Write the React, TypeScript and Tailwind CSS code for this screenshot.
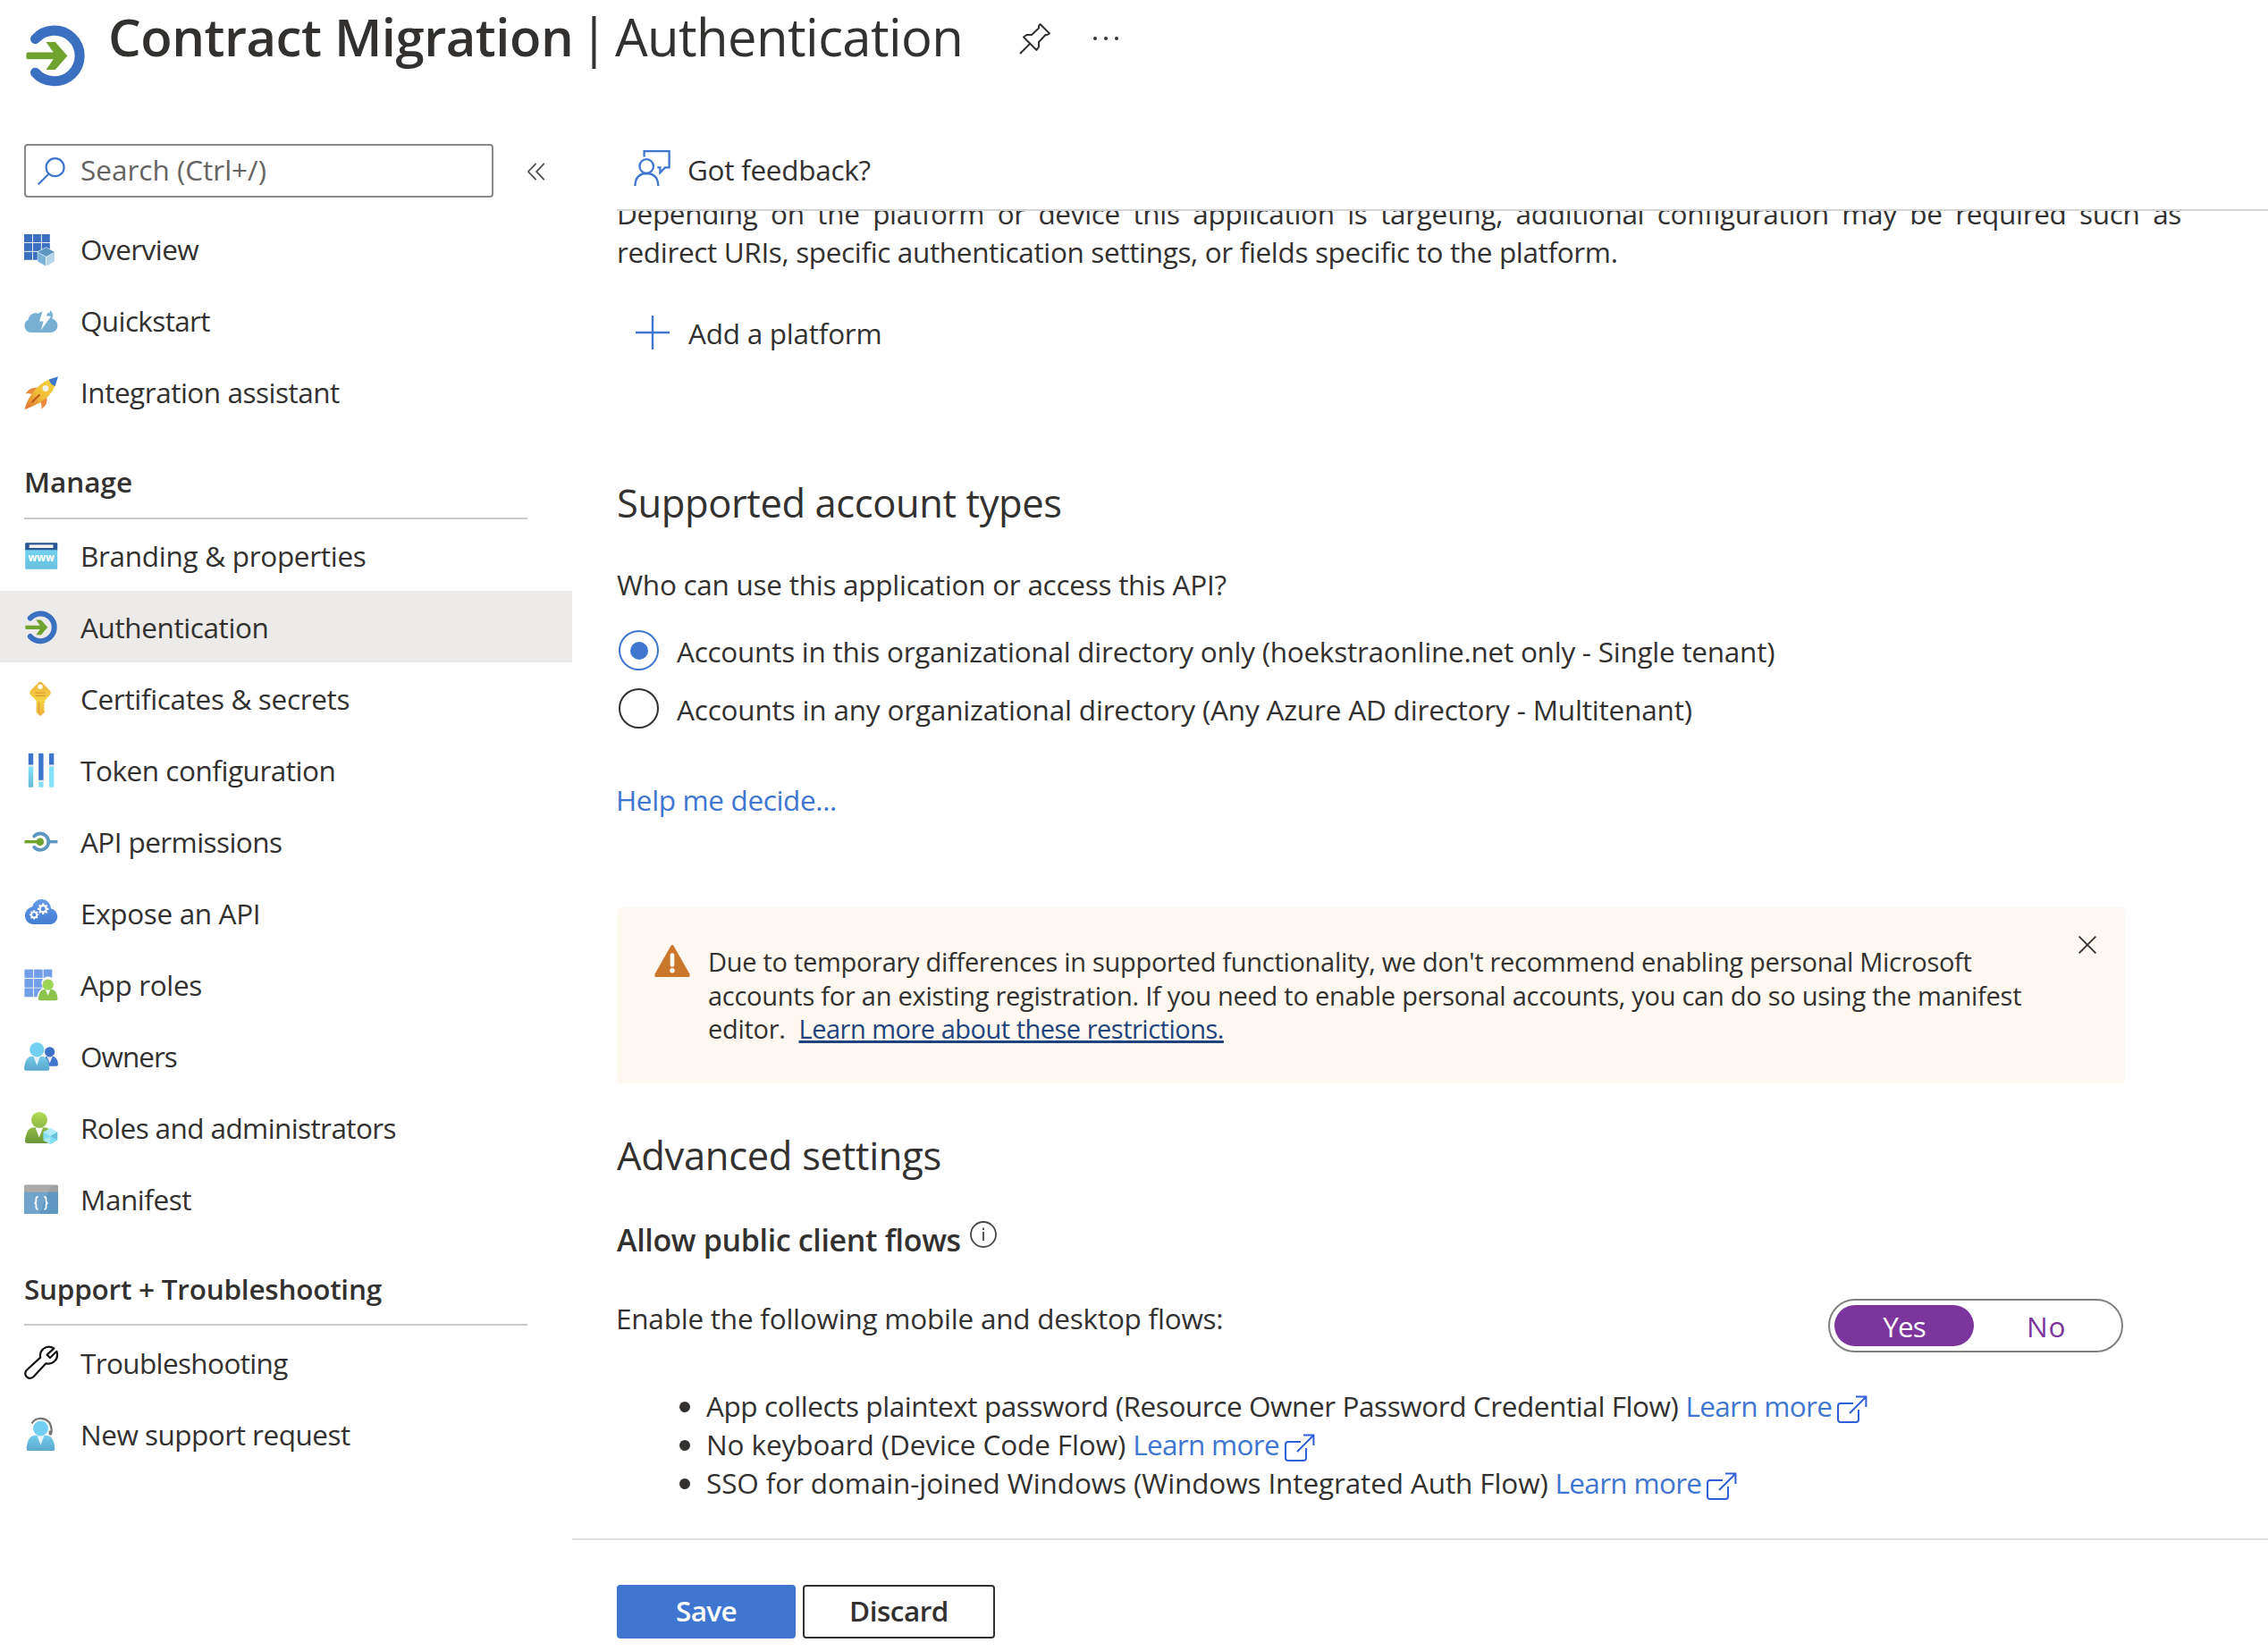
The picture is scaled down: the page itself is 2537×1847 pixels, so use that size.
import type { ReactNode } from 'react';

function Svg({ children }: { children: ReactNode }) {
  return (
    <svg viewBox="0 0 38 38" className="size-[38px] shrink-0 overflow-visible" fill="none">
      {children}
    </svg>
  );
}

const authShapes = (
  <>
    <path d="M6.8 9.6A15.4 15.4 0 1 1 6.8 30" stroke="#3b70c1" strokeWidth="6" strokeLinecap="round" />
    <path
      d="M2.4 17.7H17.8L13.3 11.4H18.9L26.3 19.8L18.9 28.2H13.3L17.8 21.9H2.4Q1.3 21.9 1.3 20.8V18.8Q1.3 17.7 2.4 17.7Z"
      fill="#6fa22e"
    />
  </>
);

const OverviewIcon = () => (
  <Svg>
    {[0, 9.9, 19.8].map((x) =>
      [1, 10.9, 20.8].map((y) => <rect key={`${x}-${y}`} x={x} y={y} width="9" height="9" fill="#3b70c1" />),
    )}
    <path d="M24.6 15.2L34.4 20.6V31.6L24.6 37L14.8 31.6V20.6Z" fill="#fff" />
    <path d="M24.6 15.8L34 21L24.6 26L15.2 21Z" fill="#5c98c2" />
    <path d="M15.2 21.6L24.2 26.6V36.4L15.2 31.4Z" fill="#7ab3d6" />
    <path d="M34 21.6L25 26.6V36.4L34 31.4Z" fill="#b6d5e8" />
  </Svg>
);

const QuickstartIcon = () => (
  <Svg>
    <path
      d="M7.5 31A7.5 7.5 0 0 1 4.6 16.8A8.2 8.2 0 0 1 15.8 9.8A10 10 0 0 1 32 15.8A7.8 7.8 0 0 1 30.5 31Z"
      fill="#78b0d4"
    />
    <path d="M21.6 4.5H28L25 12.4H30.4L18.6 28.6L21.6 18.6H17Z" fill="#fff" />
    <path d="M27.3 12L29.4 6.2Q32.6 9.6 32.2 13.5Z" fill="#78b0d4" />
  </Svg>
);

const RocketIcon = () => (
  <Svg>
    <defs>
      <linearGradient id="rocketBody" x1="30" y1="5" x2="5" y2="36" gradientUnits="userSpaceOnUse">
        <stop stopColor="#f0d03c" />
        <stop offset=".5" stopColor="#f2bf3a" />
        <stop offset="1" stopColor="#e07a30" />
      </linearGradient>
    </defs>
    <path d="M15.5 13Q6 11.5 1.6 19.4Q5.5 18.2 10 20.5Z" fill="#e8893b" />
    <path d="M25.4 23.5Q27 32 19.2 36.4Q20.4 32 17.5 27.5Z" fill="#e8893b" />
    <path d="M28.5 3.2L34.8 10.2Q30.5 21.5 17.5 29.5Q8.5 34.2 .4 37.2Q3 27.5 8.6 19.6Q17 7.8 28.5 3.2Z" fill="url(#rocketBody)" />
    <path d="M38 .2L27.8 3.5Q29 9 34.6 10.9Z" fill="#3f76cf" />
    <circle cx="24" cy="13.6" r="3.5" fill="#f3f1ee" />
    <path d="M17.6 20.4L8.6 29" stroke="#c05a1c" strokeWidth="2.2" />
  </Svg>
);

const BrandingIcon = () => (
  <Svg>
    <defs>
      <linearGradient id="brand" x1="0" y1="13" x2="0" y2="35" gradientUnits="userSpaceOnUse">
        <stop stopColor="#74d3f2" />
        <stop offset="1" stopColor="#66bedd" />
      </linearGradient>
    </defs>
    <rect x="1.2" y="5.3" width="36" height="29.4" rx="1.2" fill="url(#brand)" />
    <path d="M1.2 13.2V6.5Q1.2 5.3 2.4 5.3H36Q37.2 5.3 37.2 6.5V13.2Z" fill="#2c5797" />
    <rect x="5.7" y="7.4" width="26.8" height="3.6" fill="#f2f2f2" />
    <text x="19.2" y="26.4" textAnchor="middle" className="font-['Open_Sans'] text-[11.5px] font-bold" fill="#fff">
      www
    </text>
  </Svg>
);

const AuthIcon = () => <Svg>{authShapes}</Svg>;

const KeyIcon = () => (
  <Svg>
    <defs>
      <linearGradient id="key" x1="0" y1="0" x2="0" y2="39" gradientUnits="userSpaceOnUse">
        <stop stopColor="#eeb13c" />
        <stop offset=".55" stopColor="#f5d445" />
        <stop offset="1" stopColor="#eeb040" />
      </linearGradient>
    </defs>
    <path
      d="M15.6 1.9Q18 -.3 20.4 1.9L28.6 10.2Q31 13 28.6 15.8L23.2 21.8V24L21.8 25.4L23.2 27L21.8 28.6L23.2 30.2L21.8 31.8L23.2 33.4V34.4L18.8 38.6Q18 39.2 17.2 38.6L13.6 34.8V21.8L7.4 15.8Q5 13 7.4 10.2Z"
      fill="url(#key)"
    />
    <circle cx="18" cy="6.3" r="2.7" fill="#fff" />
    <path d="M12.2 13.2H24M12.2 16.4H24" stroke="#dd9a35" strokeWidth="1.3" />
    <path d="M16.6 23.5V35" stroke="#dd9a35" strokeWidth="1.2" />
  </Svg>
);

const TokenIcon = () => (
  <Svg>
    <defs>
      <linearGradient id="tok" x1="0" y1="15" x2="0" y2="39" gradientUnits="userSpaceOnUse">
        <stop stopColor="#86e3fb" />
        <stop offset="1" stopColor="#64b9d6" />
      </linearGradient>
    </defs>
    <rect x="4.8" y=".8" width="5.4" height="14" rx=".8" fill="#3f74cc" />
    <rect x="4.8" y="15" width="5.4" height="23.8" rx=".8" fill="url(#tok)" />
    <rect x="3.8" y="13.6" width="7.4" height="2" rx=".8" fill="#ecebea" />
    <rect x="16.2" y=".8" width="5.4" height="31" rx=".8" fill="#3f74cc" />
    <rect x="16.2" y="32" width="5.4" height="6.8" rx=".8" fill="#84e0f8" />
    <rect x="15.2" y="30.8" width="7.4" height="2" rx=".8" fill="#ecebea" />
    <rect x="27.9" y=".8" width="5.4" height="14" rx=".8" fill="#3f74cc" />
    <rect x="27.9" y="15" width="5.4" height="23.8" rx=".8" fill="#84e3fb" />
    <rect x="26.9" y="13.6" width="7.4" height="2" rx=".8" fill="#ecebea" />
  </Svg>
);

const ApiPermissionsIcon = () => (
  <Svg>
    <path d="M11.2 13.6A9.2 9.2 0 1 1 11.2 25.8" stroke="#5c97c3" strokeWidth="3.8" strokeLinecap="round" />
    <path d="M27 19.7H37.4" stroke="#5c97c3" strokeWidth="3.4" />
    <path d="M.5 19.7H16" stroke="#6fa22e" strokeWidth="3.4" />
    <circle cx="17.8" cy="19.7" r="4.3" fill="#6fa22e" />
  </Svg>
);

function Gear({ x, y, r }: { x: number; y: number; r: number }) {
  return (
    <g transform={`translate(${x} ${y}) scale(${r / 6})`} stroke="#fff">
      <circle r="3.6" strokeWidth="2.2" />
      {[0, 45, 90, 135].map((a) => (
        <path key={a} d="M0 -6.2V-4M0 4V6.2" strokeWidth="2.2" transform={`rotate(${a})`} />
      ))}
    </g>
  );
}

const ExposeIcon = () => (
  <Svg>
    <defs>
      <linearGradient id="cloud" x1="0" y1="4" x2="0" y2="32" gradientUnits="userSpaceOnUse">
        <stop stopColor="#699be8" />
        <stop offset="1" stopColor="#437cd2" />
      </linearGradient>
    </defs>
    <path
      d="M9.5 32A9.8 9.8 0 0 1 9 12.6A10.6 10.6 0 0 1 30 14.6A8.8 8.8 0 0 1 29.5 32Z"
      fill="url(#cloud)"
    />
    <Gear x={21.2} y={14.8} r={6} />
    <Gear x={11.2} y={21.4} r={5} />
  </Svg>
);

const AppRolesIcon = () => (
  <Svg>
    {[0.4, 11, 21.6].map((x) =>
      [2.4, 13, 23.6].map((y) => <rect key={`${x}-${y}`} x={x} y={y} width="9.7" height="9.7" rx=".6" fill="#739fe8" />),
    )}
    <path d="M14.4 38.4V33Q16 25 22 23.6A7.4 7.4 0 1 1 31.6 23.6Q37 25 38.8 33V38.4Z" fill="#fff" />
    <path d="M26.6 25.4Q36.4 21.8 37.5 35.2Q37.5 37.2 35.5 37.2H17.7Q15.7 37.2 15.9 35.2Q17 21.8 26.6 25.4Z" fill="#8cc34a" />
    <path d="M23.6 24.6H29.6L26.6 31.8Z" fill="#fff" />
    <circle cx="26.7" cy="19.6" r="6.2" fill="#9cd454" />
  </Svg>
);

const OwnersIcon = () => (
  <Svg>
    <defs>
      <linearGradient id="own" x1="0" y1="4" x2="0" y2="36" gradientUnits="userSpaceOnUse">
        <stop stopColor="#78d5f5" />
        <stop offset=".45" stopColor="#76cdea" />
        <stop offset="1" stopColor="#58a5cc" />
      </linearGradient>
    </defs>
    <path d="M28.6 20Q37.4 18.5 38 28.8Q38 30.7 36 30.7H24V20Z" fill="#3f76cf" />
    <path d="M25.4 20H31.8L28.6 27.6Z" fill="#e6e9f2" />
    <circle cx="28.6" cy="14.8" r="5.6" fill="#3b70c6" />
    <path d="M14.2 21Q27 15.8 28.4 33.4Q28.4 35.8 26 35.8H2.4Q0 35.8 0 33.4Q1.6 15.8 14.2 21Z" fill="url(#own)" />
    <path d="M10.4 20H18L14.2 29.8Z" fill="#e6f3fa" />
    <circle cx="14.3" cy="12.3" r="8.1" fill="#74d0f1" />
  </Svg>
);

const RolesIcon = () => (
  <Svg>
    <defs>
      <linearGradient id="role" x1="0" y1="2" x2="0" y2="37" gradientUnits="userSpaceOnUse">
        <stop stopColor="#b2dc55" />
        <stop offset="1" stopColor="#6a9638" />
      </linearGradient>
    </defs>
    <path d="M16.8 20.6Q31.4 14.4 33 34.4Q33 36.9 30.4 36.9H3.6Q1 36.9 1 34.4Q2.6 14.4 16.8 20.6Z" fill="url(#role)" />
    <path d="M12.6 19.4H21L16.8 30.6Z" fill="#fff" />
    <circle cx="17" cy="10.9" r="9" fill="url(#role)" />
    <path d="M29.3 20.2L37.2 24.6V33.6L29.3 38L21.4 33.6V24.6Z" fill="#84dff5" />
    <path d="M29.3 20.2L37.2 24.6L29.3 29L21.4 24.6Z" fill="#b2ecfb" />
    <path d="M37.2 24.6V33.6L29.3 29Z" fill="#6bbfd9" />
    <path d="M29.3 29V38L21.4 33.6Z" fill="#aae9f9" />
  </Svg>
);

const ManifestIcon = () => (
  <Svg>
    <rect y="3.7" width="38" height="32.4" rx="1.2" fill="#5f97c3" />
    <path d="M1.2 36.1Q0 36.1 0 34.9V11H27L17.4 36.1Z" fill="#70a4ca" />
    <path d="M0 11.4V4.9Q0 3.7 1.2 3.7H36.8Q38 3.7 38 4.9V11.4Z" fill="#a0a0a0" />
    <path d="M0 11.4V4.9Q0 3.7 1.2 3.7H31.5L27 11.4Z" fill="#ababab" />
    <path
      d="M15.6 17Q13.4 17 13.4 19.2V21.6Q13.4 23.9 11.4 23.9Q13.4 23.9 13.4 26.2V28.6Q13.4 30.8 15.6 30.8M22.4 17Q24.6 17 24.6 19.2V21.6Q24.6 23.9 26.6 23.9Q24.6 23.9 24.6 26.2V28.6Q24.6 30.8 22.4 30.8"
      stroke="#fff"
      strokeWidth="1.8"
    />
  </Svg>
);

const WrenchIcon = () => (
  <Svg>
    <path
      d="M33.4 3.4L25.6 10.6L29 14L36.4 6.8Q38.6 13.4 34 17.8Q29.6 21.8 24.4 20.2L10.4 35.2Q6.6 38.6 3 35.4Q-.4 31.8 2.6 28L18.2 13.6Q17 8 21.4 4Q27 -.4 33.4 3.4Z"
      stroke="#111"
      strokeWidth="2.2"
      strokeLinejoin="round"
    />
  </Svg>
);

const SupportIcon = () => (
  <Svg>
    <defs>
      <linearGradient id="sup" x1="0" y1="20" x2="0" y2="38" gradientUnits="userSpaceOnUse">
        <stop stopColor="#74cdee" />
        <stop offset="1" stopColor="#5aa8cd" />
      </linearGradient>
    </defs>
    <path d="M8.6 7.4Q12 1.6 18.6 1.8Q29.8 2.4 30.6 14V18" stroke="#777" strokeWidth="2.2" />
    <rect x="27.6" y="15.4" width="3.6" height="5.2" rx="1" fill="#777" />
    <path d="M18.5 22Q33 16.6 34.3 35.4Q34.3 38 31.8 38H5.2Q2.7 38 2.7 35.4Q4 16.6 18.5 22Z" fill="url(#sup)" />
    <path d="M14.6 21.2H22.4L18.5 31.8Z" fill="#e9f5fb" />
    <circle cx="18.5" cy="13" r="8.5" fill="#74d0f3" />
  </Svg>
);

type Item = { label: string; icon: ReactNode; spacing: string; active?: boolean };

const top: Item[] = [
  { label: 'Overview', icon: <OverviewIcon />, spacing: '-mt-[3px] tracking-[-0.55px]' },
  { label: 'Quickstart', icon: <QuickstartIcon />, spacing: '-mt-[3px] tracking-[-0.63px]' },
  { label: 'Integration assistant', icon: <RocketIcon />, spacing: '-mt-[3px] tracking-[-0.48px]' },
];

const manage: Item[] = [
  { label: 'Branding & properties', icon: <BrandingIcon />, spacing: 'tracking-[-0.3px]' },
  { label: 'Authentication', icon: <AuthIcon />, spacing: 'tracking-[-0.4px]', active: true },
  { label: 'Certificates & secrets', icon: <KeyIcon />, spacing: 'tracking-[-0.34px]' },
  { label: 'Token configuration', icon: <TokenIcon />, spacing: 'tracking-[-0.46px]' },
  { label: 'API permissions', icon: <ApiPermissionsIcon />, spacing: 'tracking-[-0.58px]' },
  { label: 'Expose an API', icon: <ExposeIcon />, spacing: 'tracking-[-0.35px]' },
  { label: 'App roles', icon: <AppRolesIcon />, spacing: 'tracking-[-0.35px]' },
  { label: 'Owners', icon: <OwnersIcon />, spacing: 'tracking-[-1px]' },
  { label: 'Roles and administrators', icon: <RolesIcon />, spacing: 'tracking-[-0.6px]' },
  { label: 'Manifest', icon: <ManifestIcon />, spacing: 'tracking-[-0.45px]' },
];

const support: Item[] = [
  { label: 'Troubleshooting', icon: <WrenchIcon />, spacing: 'tracking-[-0.63px]' },
  { label: 'New support request', icon: <SupportIcon />, spacing: 'tracking-[-0.5px]' },
];

function Nav({ items }: { items: Item[] }) {
  return (
    <ul>
      {items.map((it) => (
        <li
          key={it.label}
          className={`flex h-20 items-center gap-[25px] pl-[27px] ${it.active ? 'bg-[#ecebe9]' : ''}`}
        >
          {it.icon}
          <span className={`whitespace-nowrap ${it.spacing}`}>{it.label}</span>
        </li>
      ))}
    </ul>
  );
}

function ExternalIcon() {
  return (
    <svg viewBox="0 0 34 32" className="ml-[6px] mt-[10px] h-8 w-[34px] shrink-0" fill="none" stroke="#2f5fd8" strokeWidth="2">
      <path d="M18 9H4Q1 9 1 12V27Q1 30 4 30H21Q24 30 24 27V16" />
      <path d="M14 20L32 2M21 1.4H32.4V13" />
    </svg>
  );
}

const flows = [
  { text: 'App collects plaintext password (Resource Owner Password Credential Flow)', spacing: 'tracking-[-0.42px]' },
  { text: 'No keyboard (Device Code Flow)', spacing: 'tracking-[-0.1px]' },
  { text: 'SSO for domain-joined Windows (Windows Integrated Auth Flow)', spacing: 'tracking-[-0.12px]' },
];

export default function App() {
  return (
    <div className="flex h-[1847px] w-[2537px] flex-col overflow-hidden bg-white font-['Open_Sans','Noto_Sans',sans-serif] text-[31.5px] leading-[43px] text-[#323130]">
      <header className="flex h-[140px] shrink-0 items-start pl-[27px]">
        <svg viewBox="0 0 38 38" className="mt-[26px] size-[70px] overflow-visible" fill="none">
          {authShapes}
        </svg>
        <h1 className="ml-6 mt-px flex whitespace-nowrap text-[58px] leading-[80px]">
          <span className="w-[527px] font-semibold tracking-[-0.5px]">Contract Migration</span>
          <span className="w-[33px] text-center">|</span>
          <span className="ml-[7px] w-[387px] tracking-[-0.6px]">Authentication</span>
        </h1>
        <svg viewBox="0 0 36 36" className="ml-[65px] mt-[25px] size-9" fill="none" stroke="#323130" strokeWidth="2" strokeLinejoin="round">
          <path d="M23.5 2L34 12.5L31.5 14H29.5L22 22V27.5L19.5 31L5 16.5L8.5 14H14L22 6.5V4Z" />
          <path d="M12 24L1 35" />
        </svg>
        <div className="ml-[47px] mt-[41px] flex gap-2">
          <i className="size-1 rounded-full bg-[#323130]" />
          <i className="size-1 rounded-full bg-[#323130]" />
          <i className="size-1 rounded-full bg-[#323130]" />
        </div>
      </header>

      <div className="flex min-h-0 flex-1">
        <aside className="w-[640px] shrink-0 pt-[21px]">
          <div className="mb-[19px] flex items-center pl-[27px]">
            <div className="flex h-[60px] w-[525px] items-center rounded-[4px] border-2 border-[#8a8886] pl-[13px] text-[#666462]">
              <svg viewBox="0 0 31 31" className="size-[31px]" fill="none" stroke="#3f76cf" strokeWidth="2.2">
                <circle cx="19.6" cy="11.2" r="10" />
                <path d="M12.5 18.5L.8 30.2" />
              </svg>
              <span className="-mt-[3px] ml-[17px]">Search (Ctrl+/)</span>
            </div>
            <svg viewBox="0 0 20 20" className="ml-[38px] mt-0.5 size-5" fill="none" stroke="#4a4948" strokeWidth="1.7">
              <path d="M9.6 .8L.9 10L9.6 19.2M18.8 .8L10.1 10L18.8 19.2" />
            </svg>
          </div>
          <Nav items={top} />
          <div className="ml-[27px] w-[563px] border-b-2 border-[#cbcaca] pb-5 pt-[39px] font-semibold leading-10">Manage</div>
          <Nav items={manage} />
          <div className="mb-px ml-[27px] w-[563px] border-b-2 border-[#cbcaca] pb-[19px] pt-[41px] font-semibold leading-10 tracking-[-0.24px]">
            Support + Troubleshooting
          </div>
          <Nav items={support} />
        </aside>

        <main className="flex min-w-0 flex-1 flex-col">
          <div className="ml-[50px] flex h-24 shrink-0 items-start border-b-2 border-[#d5d5d5] pl-[19px]">
            <svg viewBox="0 0 41 40" className="mt-7 h-10 w-[41px]" fill="none" stroke="#3f76cf" strokeWidth="2.3">
              <path d="M11.6 7.4V1.2H39.6V19.4H35L29.4 25.2V19.4H26.4" />
              <circle cx="14.2" cy="18" r="7.8" />
              <path d="M1.4 40Q1.8 26.2 14.4 26Q26.8 26.2 27.4 40" />
            </svg>
            <span className="ml-[19px] mt-7 tracking-[-0.28px]">Got feedback?</span>
          </div>

          <div className="min-h-0 flex-1 overflow-hidden pl-[50px]">
            <p className="-mt-[19px] w-[1750px] whitespace-nowrap">
              <span className="block w-full whitespace-normal tracking-[-0.33px] [text-align-last:justify]">
                Depending on the platform or device this application is targeting, additional configuration may be required such as
              </span>
              <span className="block tracking-[-0.35px]">
                redirect URIs, specific authentication settings, or fields specific to the platform.
              </span>
            </p>

            <div className="mt-[49px] flex h-11 items-center pl-[21px]">
              <svg viewBox="0 0 38 38" className="-mt-1 size-[38px]" stroke="#3f76cf" strokeWidth="2.4">
                <path d="M0 19H38M19 0V38" />
              </svg>
              <span className="-mt-[3px] ml-[21px] tracking-[-0.25px]">Add a platform</span>
            </div>

            <h2 className="mt-[137px] text-[43.5px] leading-[60px] tracking-[-0.4px]">Supported account types</h2>
            <p className="mt-[39px] tracking-[-0.26px]">Who can use this application or access this API?</p>

            <div className="mt-[30px] flex flex-col gap-5">
              <label className="flex h-[45px] items-center">
                <span className="ml-0.5 flex size-[45px] items-center justify-center rounded-full border-2 border-[#3f76cf]">
                  <span className="size-5 rounded-full bg-[#3f76cf]" />
                </span>
                <span className="ml-[20px] mt-0.5 tracking-[-0.25px]">
                  Accounts in this organizational directory only (hoekstraonline.net only - Single tenant)
                </span>
              </label>
              <label className="flex h-[45px] items-center">
                <span className="ml-0.5 size-[45px] rounded-full border-2 border-[#323130]" />
                <span className="ml-[20px] mt-0.5 tracking-[-0.18px]">
                  Accounts in any organizational directory (Any Azure AD directory - Multitenant)
                </span>
              </label>
            </div>

            <a className="-ml-px mt-[58px] block tracking-[-0.36px] text-[#3f76cf]">Help me decide...</a>

            <section className="mt-[99px] flex h-[197px] w-[1687px] items-start rounded-[5px] bg-[#fef8f1] text-[29px] leading-[37.5px]">
              <svg viewBox="0 0 40 36" className="ml-[42px] mt-[42px] h-9 w-10" fill="none">
                <path d="M18.2 1.4Q20 -.8 21.8 1.4L39.4 32.6Q40.4 36 37.6 36H2.4Q-.4 36 .6 32.6Z" fill="#c9782b" />
                <path d="M20 11.5V22.5" stroke="#fff" strokeWidth="4.6" strokeLinecap="round" />
                <circle cx="20" cy="28.8" r="2.7" fill="#fff" />
              </svg>
              <p className="ml-5 mt-[42px] w-[1500px] whitespace-nowrap">
                <span className="block tracking-[-0.295px]">
                  Due to temporary differences in supported functionality, we don't recommend enabling personal Microsoft
                </span>
                <span className="block tracking-[-0.26px]">
                  accounts for an existing registration. If you need to enable personal accounts, you can do so using the manifest
                </span>
                <span className="mr-[15px] tracking-[-0.3px]">editor.</span>
                <a className="tracking-[-0.5px] text-[#1f447d] underline decoration-3 underline-offset-2">
                  Learn more about these restrictions.
                </a>
              </p>
              <svg viewBox="0 0 20 20" className="ml-[33px] mt-[32px] size-5" stroke="#323130" strokeWidth="1.8">
                <path d="M.6 .6L19.4 19.4M19.4 .6L.6 19.4" />
              </svg>
            </section>

            <h2 className="mt-[51px] text-[43.5px] leading-[60px] tracking-[-0.3px]">Advanced settings</h2>
            <div className="mt-[42px] flex h-11 items-start">
              <h3 className="text-[34px] font-semibold leading-[44px] tracking-[-0.35px]">Allow public client flows</h3>
              <svg viewBox="0 0 30 30" className="ml-[10px] mt-px size-[30px]" fill="none" stroke="#4a4948">
                <circle cx="15" cy="15" r="14" strokeWidth="1.8" />
                <path d="M15 12V22M15 7.4V10" strokeWidth="1.8" />
              </svg>
            </div>

            <div className="mt-11 flex h-[60px] w-[1685px] items-start justify-between">
              <p className="-ml-px tracking-[-0.23px]">Enable the following mobile and desktop flows:</p>
              <div className="flex h-[60px] w-[330px] items-center rounded-full border-2 border-[#808080] pl-[5px]">
                <span className="flex h-[46px] w-[156px] items-center justify-center rounded-full bg-[#7c359c] font-medium leading-[43px] tracking-[-1px] text-white">
                  Yes
                </span>
                <span className="flex-1 pl-[59px] tracking-[0.8px] text-[#7c359c]">No</span>
              </div>
            </div>

            <ul className="mt-[38px]">
              {flows.map((f) => (
                <li key={f.text} className="flex h-[43px] items-start whitespace-nowrap pl-[70px]">
                  <i className="mr-[18px] mt-[17px] size-3 rounded-full bg-[#323130]" />
                  <span className={f.spacing}>{f.text}</span>
                  <a className="ml-2 tracking-[-0.7px] text-[#3f76cf]">Learn more</a>
                  <ExternalIcon />
                </li>
              ))}
            </ul>
          </div>

          <footer className="flex h-[126px] shrink-0 items-start gap-2 border-t-2 border-[#dedede] pl-[50px] pt-[50px] font-semibold">
            <button className="h-[60px] w-[200px] rounded-[4px] bg-[#3f76cf] pb-[3px] tracking-[-0.6px] text-white">Save</button>
            <button className="h-[60px] w-[215px] rounded-[4px] border-2 border-[#323130] pb-[3px] tracking-[-0.5px]">Discard</button>
          </footer>
        </main>
      </div>
    </div>
  );
}
